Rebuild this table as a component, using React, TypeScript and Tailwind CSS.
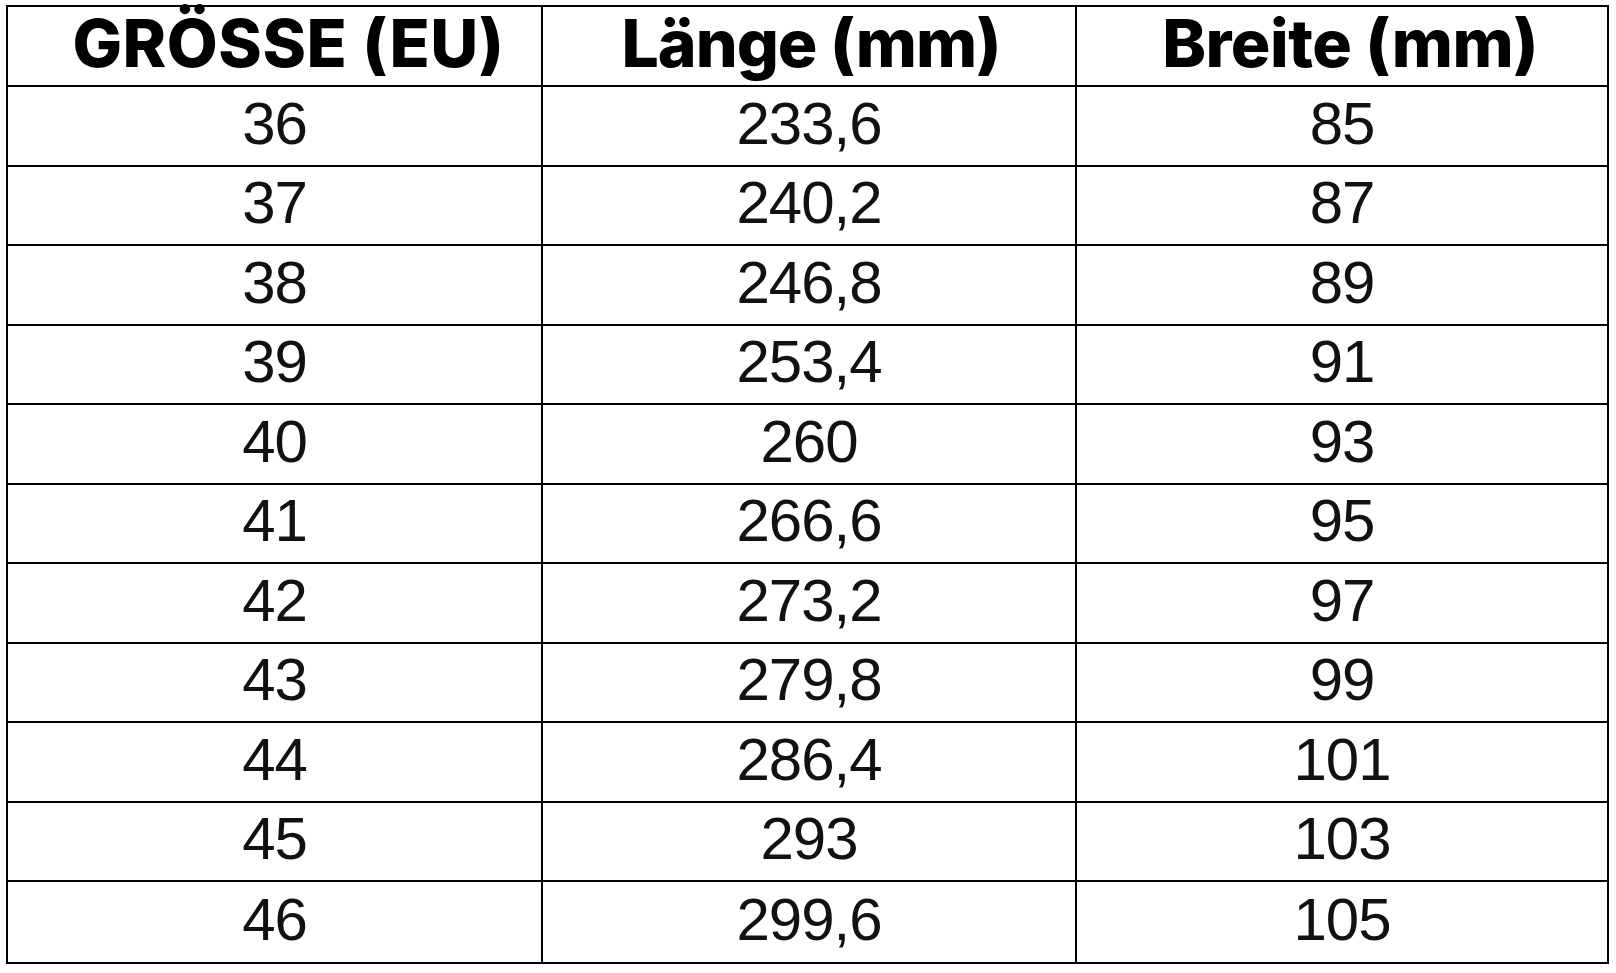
import React from "react";

const rows: [string, string, string][] = [
  ["36", "233,6", "85"],
  ["37", "240,2", "87"],
  ["38", "246,8", "89"],
  ["39", "253,4", "91"],
  ["40", "260", "93"],
  ["41", "266,6", "95"],
  ["42", "273,2", "97"],
  ["43", "279,8", "99"],
  ["44", "286,4", "101"],
  ["45", "293", "103"],
  ["46", "299,6", "105"],
];

const headers = [
  { t: "GRÖSSE (EU)", cls: "pl-[28px] tracking-[0.5px]" },
  { t: "Länge (mm)", cls: "pl-[4px] tracking-[-1px]" },
  { t: "Breite (mm)", cls: "pl-[16px] tracking-[-0.5px]" },
];

export default function App() {
  return (
    <div className="w-[1616px] h-[973px] bg-white overflow-hidden pt-[5px] pl-[6px]">
      <div className="w-[1603px] border-2 border-black grid grid-cols-[535px_534px_530px] grid-rows-[80px_repeat(11,79.5px)]">
        {headers.map((h, i) => (
          <div
            key={h.t}
            className={`flex items-center justify-center border-b-2 border-black pb-[6px] ${i < 2 ? "border-r-2" : ""}`}
          >
            <span
              className={`font-['Inter',sans-serif] font-extrabold text-[66px] leading-none text-black ${h.cls}`}
            >
              {h.t}
            </span>
          </div>
        ))}
        {rows.map((r, ri) =>
          r.map((c, ci) => (
            <div
              key={`${ri}-${ci}`}
              className={`flex items-center justify-center border-black ${ci < 2 ? "border-r-2" : ""} ${ri < rows.length - 1 ? "border-b-2" : ""}`}
            >
              <span className="font-['Liberation_Sans',Arial,sans-serif] text-[60px] leading-none text-[#111] tracking-[-1px] pb-[4px]">
                {c}
              </span>
            </div>
          ))
        )}
      </div>
    </div>
  );
}
